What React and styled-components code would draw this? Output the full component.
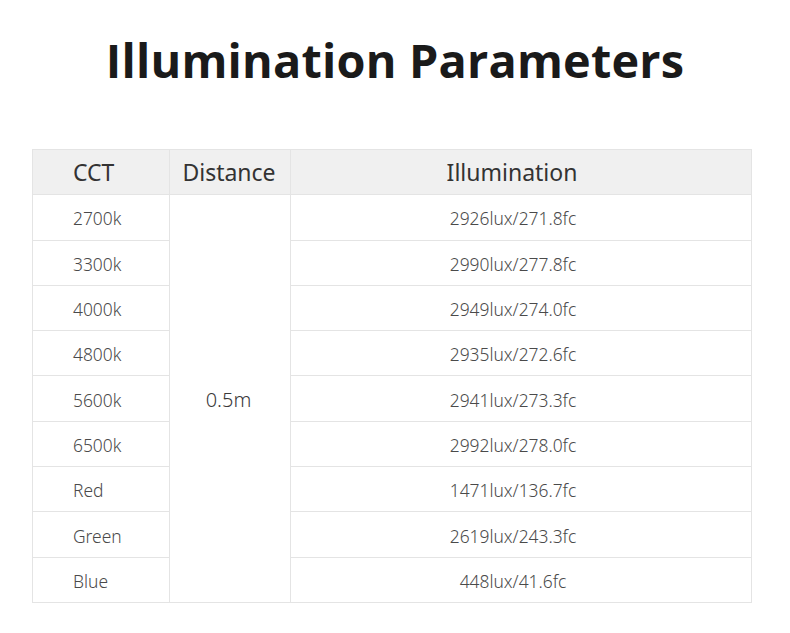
import React from "react";
import styled, { createGlobalStyle } from "styled-components";

const Global = createGlobalStyle`
  html, body { margin: 0; padding: 0; background: #fff; }
  body { font-family: "Noto Sans", "Open Sans", sans-serif; }
`;

const Page = styled.div`
  width: 790px;
  height: 633px;
  box-sizing: border-box;
  padding-top: 28px;
  display: flex;
  flex-direction: column;
  align-items: center;
`;

const Title = styled.h1`
  margin: 0;
  font-family: "Open Sans", sans-serif;
  font-weight: 700;
  font-size: 46.8px;
  line-height: 64px;
  color: #1a1a1a;
  letter-spacing: 0.2px;
`;

const Table = styled.table`
  align-self: flex-start;
  margin: 57px 0 0 32px;
  width: 720px;
  border-collapse: collapse;
  table-layout: fixed;
  border: 1px solid #e4e4e4;
`;

const Head = styled.th`
  height: 44.3px;
  padding: 0 ${(p) => p.$pr || 0}px 0 ${(p) => p.$pl || 0}px;
  background: #f0f0f0;
  border: 1px solid #e4e4e4;
  font-weight: 400;
  font-size: 23px;
  color: #333;
  text-align: ${(p) => (p.$pl ? "left" : "center")};
`;

const Cell = styled.td`
  height: 42.3px;
  padding: 2px ${(p) => p.$pr || 0}px 0 ${(p) => p.$pl || 0}px;
  border: 1px solid #e4e4e4;
  font-size: 17.4px;
  font-weight: 300;
  color: #4a4a4a;
  text-align: ${(p) => (p.$pl ? "left" : "center")};
`;

const DistCell = styled(Cell)`
  font-size: 20px;
  color: #3a3a3a;
`;

const rows = [
  ["2700k", "2926lux/271.8fc"],
  ["3300k", "2990lux/277.8fc"],
  ["4000k", "2949lux/274.0fc"],
  ["4800k", "2935lux/272.6fc"],
  ["5600k", "2941lux/273.3fc"],
  ["6500k", "2992lux/278.0fc"],
  ["Red", "1471lux/136.7fc"],
  ["Green", "2619lux/243.3fc"],
  ["Blue", "448lux/41.6fc"],
];

export default function App() {
  return (
    <Page>
      <Global />
      <Title>Illumination Parameters</Title>
      <Table>
        <colgroup>
          <col style={{ width: 137 }} />
          <col style={{ width: 121 }} />
          <col />
        </colgroup>
        <thead>
          <tr>
            <Head $pl={40}>CCT</Head>
            <Head $pr={2}>Distance</Head>
            <Head $pr={18}>Illumination</Head>
          </tr>
        </thead>
        <tbody>
          {rows.map(([cct, lux], i) => (
            <tr key={cct}>
              <Cell $pl={40}>{cct}</Cell>
              {i === 0 && (
                <DistCell $pr={3} rowSpan={rows.length}>
                  0.5m
                </DistCell>
              )}
              <Cell $pr={16}>{lux}</Cell>
            </tr>
          ))}
        </tbody>
      </Table>
    </Page>
  );
}
